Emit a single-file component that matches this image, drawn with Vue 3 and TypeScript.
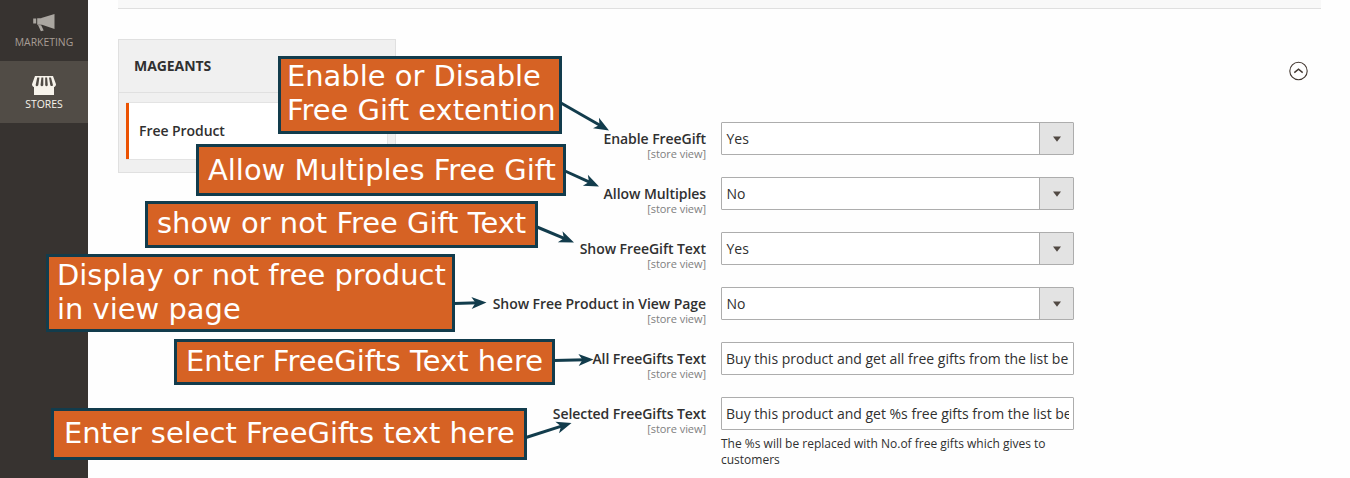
<script setup lang="ts">
interface Field {
  label: string
  value: string
  kind: 'select' | 'text'
  note?: string
}

interface Callout {
  id: string
  lines: string[]
}

const fields: Field[] = [
  { label: 'Enable FreeGift', value: 'Yes', kind: 'select' },
  { label: 'Allow Multiples', value: 'No', kind: 'select' },
  { label: 'Show FreeGift Text', value: 'Yes', kind: 'select' },
  { label: 'Show Free Product in View Page', value: 'No', kind: 'select' },
  { label: 'All FreeGifts Text', value: 'Buy this product and get all free gifts from the list below', kind: 'text' },
  {
    label: 'Selected FreeGifts Text',
    value: 'Buy this product and get %s free gifts from the list below',
    kind: 'text',
    note: 'The %s will be replaced with No.of free gifts which gives to customers',
  },
]

const callouts: Callout[] = [
  { id: 'enable', lines: ['Enable or Disable', 'Free Gift extention'] },
  { id: 'multiples', lines: ['Allow Multiples Free Gift'] },
  { id: 'show-text', lines: ['show or not Free Gift Text'] },
  { id: 'view-page', lines: ['Display or not free product', 'in view page'] },
  { id: 'all-text', lines: ['Enter FreeGifts Text here'] },
  { id: 'selected-text', lines: ['Enter select FreeGifts text here'] },
]

// Start and tip of each arrow: x1, y1, x2, y2
const arrows: number[][] = [
  [561, 103, 609, 130.5],
  [565, 171, 599, 186.5],
  [537, 227, 574, 242.5],
  [454, 303.5, 486.5, 302.5],
  [554, 360.5, 593.5, 359.5],
  [526, 437.5, 571.5, 423],
]

function place(a: number[]): string {
  const angle = (Math.atan2(a[3] - a[1], a[2] - a[0]) * 180) / Math.PI
  return `translate(${a[2]} ${a[3]}) rotate(${angle})`
}

function shaft(a: number[]): number {
  return -Math.hypot(a[2] - a[0], a[3] - a[1])
}
</script>

<template>
  <div class="page">
    <nav class="sidebar">
      <a class="menu marketing">
        <svg width="24" height="20" viewBox="0 0 24 20">
          <path d="M22.500 1v15L9.300 11.600V5zM1.200 5.600h3v5h-3zM5.200 5.200h4.600v6.500H5.200zM6 12l3.200.3 2.500 5.100-2.800.8z" fill="#aaa6a0" />
        </svg>
        <span>MARKETING</span>
      </a>
      <a class="menu stores">
        <svg width="26" height="20" viewBox="0 0 26 20">
          <path d="M4 0h18l3 8.200c0 1.400-.8 2.400-2 2.800v8H3v-8c-1.200-.4-2-1.400-2-2.800z" fill="#f7f3eb" />
          <path d="M6.200 1.500h2.200L7.300 9.200q-1.600 2-2.700 0zM10.400 1.500h1.900v7.700q-1.300 2-2.800 0zM14.200 1.500h1.900l.7 7.700q-1.300 2-2.600 0zM18 1.500h2l2 7.700q-1.400 1.800-2.700 0z" fill="#514c46" />
        </svg>
        <span>STORES</span>
      </a>
    </nav>

    <main class="content">
      <div class="toolbar"></div>
      <div class="columns">
        <aside class="tabs">
          <h2>MAGEANTS</h2>
          <a class="tab">Free Product</a>
        </aside>
        <form class="fields">
          <div v-for="f in fields" :key="f.label" class="field">
            <label>{{ f.label }}<small>[store view]</small></label>
            <div class="control">
              <div class="box" :class="f.kind">
                <span class="value">{{ f.value }}</span>
                <span v-if="f.kind === 'select'" class="arrow">
                  <svg width="8" height="6" viewBox="0 0 8 6"><path d="M0 .5h8L4 5.800z" fill="#514943" /></svg>
                </span>
              </div>
              <p v-if="f.note">{{ f.note }}</p>
            </div>
          </div>
        </form>
        <svg class="collapse" width="20" height="20" viewBox="0 0 20 20" fill="none" stroke="#41362f">
          <circle cx="10.500" cy="10" r="8.700" stroke-width="1.100" />
          <path d="M6.300 11.600 10.500 8.200l4.200 3.400" stroke-width="1.400" />
        </svg>
      </div>
    </main>

    <svg class="arrows" width="1350" height="478">
      <g v-for="(a, i) in arrows" :key="i" :transform="place(a)">
        <path :d="`M${shaft(a)} 0H-8`" stroke="#123c4c" stroke-width="3" />
        <path d="M0 0-15-6-11 0-15 6z" fill="#123c4c" />
      </g>
    </svg>
    <div v-for="c in callouts" :key="c.id" class="callout" :class="c.id">
      <span v-for="line in c.lines" :key="line">{{ line }}</span>
    </div>
  </div>
</template>

<style>
body {
  margin: 0;
  overflow: hidden;
}
</style>

<style scoped>
.page {
  position: relative;
  display: flex;
  width: 1350px;
  height: 478px;
  overflow: hidden;
  background: #fefefe;
  color: #303030;
  font: 14px/19px "Open Sans", sans-serif;
}
.sidebar {
  width: 88px;
  flex: none;
  background: #373330;
}
.menu {
  display: flex;
  flex-direction: column;
  align-items: center;
  box-sizing: border-box;
  height: 62px;
  color: #a79d95;
  font-size: 10.4px;
  line-height: 14px;
}
.marketing {
  height: 61px;
  padding-top: 13px;
}
.marketing span {
  margin-top: 2px;
}
.stores {
  padding-top: 15px;
  background: #514c46;
  color: #f7f3eb;
}
.stores span {
  margin-top: 1px;
}
.content {
  flex: 1;
  padding: 0 29px 0 30px;
}
.toolbar {
  height: 8px;
  border-bottom: 1px solid #dfdfdf;
  background: #f8f8f8;
}
.columns {
  display: flex;
  align-items: flex-start;
  padding-top: 30px;
}
.tabs {
  box-sizing: border-box;
  width: 278px;
  height: 134px;
  border: 1px solid #e0e0e0;
  background: #f0f0f0;
}
.tabs h2 {
  box-sizing: border-box;
  height: 53px;
  margin: 0 0 9px;
  padding: 16px 15px;
  border-bottom: 1px solid #e0e0e0;
  font-size: 14px;
  line-height: 19px;
  font-weight: 700;
  letter-spacing: -0.06px;
}
.tab {
  display: block;
  box-sizing: border-box;
  height: 58px;
  margin: 0 7px;
  padding: 18px 10px 18px 13px;
  border: solid #e3e3e3;
  border-width: 1px 1px 1px 0;
  background: linear-gradient(#eb5202, #eb5202) 0 0 / 3px 100% no-repeat border-box, #fff;
  font-weight: 600;
  letter-spacing: -0.06px;
}
.fields {
  width: 678px;
  padding-top: 83px;
}
.field {
  display: flex;
  height: 55px;
}
.field label {
  width: 310px;
  margin-right: 15px;
  padding-top: 7px;
  text-align: right;
  font-weight: 600;
  letter-spacing: -0.06px;
}
.field small {
  display: block;
  margin-top: -2px;
  color: #808080;
  font-size: 11px;
  line-height: 15px;
  font-weight: 400;
}
.control {
  width: 353px;
}
.box {
  display: flex;
  box-sizing: border-box;
  height: 33px;
  border: 1px solid #adadad;
  border-radius: 1px;
  background: #fff;
  line-height: 31px;
}
.value {
  flex: 1;
  margin: 0 4px;
  overflow: hidden;
  white-space: nowrap;
}
.select .value {
  text-indent: 0.5px;
}
.arrow {
  display: flex;
  align-items: center;
  justify-content: center;
  width: 33px;
  border-left: 1px solid #adadad;
  background: #e3e3e3;
}
.control p {
  margin: 6px 0 0;
  font-size: 12px;
  line-height: 16px;
}
.collapse {
  margin: 22px 0 0 214px;
}
.arrows {
  position: absolute;
  inset: 0;
}
.callout {
  position: absolute;
  display: flex;
  flex-direction: column;
  justify-content: center;
  box-sizing: border-box;
  border: 3px solid #123c4c;
  background: #d66224;
  color: #fff;
  font: 28.95px/34px "DejaVu Sans", sans-serif;
  white-space: nowrap;
}
.enable {
  left: 278px;
  top: 56px;
  width: 284px;
  height: 78px;
  padding: 0 0 4px 6px;
}
.multiples {
  left: 196px;
  top: 144px;
  width: 370px;
  height: 52px;
  padding-left: 9px;
}
.show-text {
  left: 145px;
  top: 201px;
  width: 393px;
  height: 47px;
  padding: 0 0 3px 9px;
}
.view-page {
  left: 46px;
  top: 254px;
  width: 409px;
  height: 78px;
  padding: 0 0 2px 8px;
}
.all-text {
  left: 174px;
  top: 339px;
  width: 381px;
  height: 46px;
  padding: 0 0 2px 9px;
}
.selected-text {
  left: 51px;
  top: 408px;
  width: 476px;
  height: 52px;
  padding: 0 0 2px 10px;
}
</style>
